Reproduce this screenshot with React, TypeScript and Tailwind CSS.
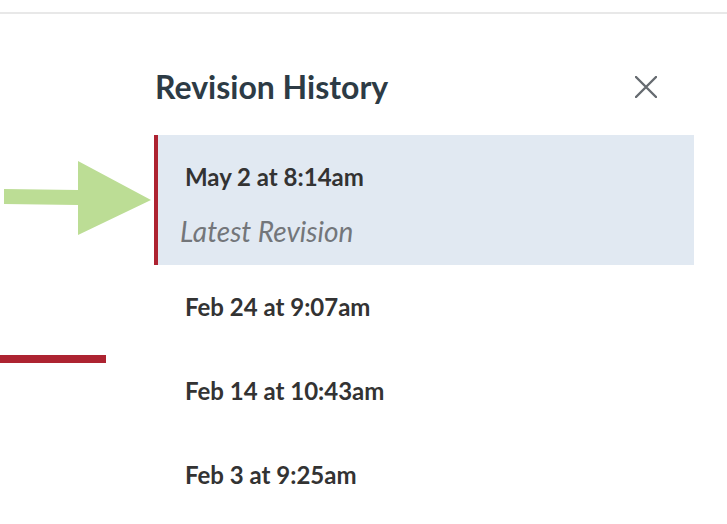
const revisions = ["Feb 24 at 9:07am", "Feb 14 at 10:43am", "Feb 3 at 9:25am"]

export default function App() {
  return (
    <div className="relative h-[524px] w-[727px] overflow-hidden bg-white font-['Lato','Noto_Sans',sans-serif]">
      {/* top bar edge */}
      <div className="h-[14px] border-b-2 border-[#e8e8e8]" />

      <div className="flex">
        {/* page behind the tray */}
        <div className="w-[154px] shrink-0">
          <div className="mt-[341px] h-[8px] w-[106px] bg-[#ad2331]" />
        </div>

        {/* revision tray */}
        <div className="w-[540px] shrink-0">
          <div className="flex items-center justify-between pt-[54px] pb-[29px] pr-[37px]">
            <h2 className="pl-[1px] text-[32px] leading-[1.2] font-bold text-[#2d3b45]">Revision History</h2>
            <svg width="22" height="22" viewBox="0 0 22 22" className="text-[#666b70]">
              <path d="M1 1L21 21M21 1L1 21" stroke="currentColor" strokeWidth="2.4" strokeLinecap="round" />
            </svg>
          </div>

          <ul>
            <li className="h-[130px] border-l-4 border-[#ad2331] bg-[#e1e9f2] pt-[28px] pl-[27px]">
              <div className="text-[24px] leading-[1.2] font-bold text-[#333333]">May 2 at 8:14am</div>
              <div className="mt-[23px] -ml-[5px] text-[28px] leading-[1.2] italic text-[#73767a]">
                Latest Revision
              </div>
            </li>
            {revisions.map((r) => (
              <li key={r} className="h-[84px] pt-[28px] pl-[31px] text-[24px] leading-[1.2] font-bold text-[#333333]">
                {r}
              </li>
            ))}
          </ul>
        </div>
      </div>

      {/* callout arrow */}
      <svg className="absolute left-0 top-[150px]" width="160" height="100" viewBox="0 0 160 100">
        <polygon points="4,39 78,40 78,11 151,50 78,85 78,55 4,54" fill="#bcdd95" />
      </svg>
    </div>
  )
}
